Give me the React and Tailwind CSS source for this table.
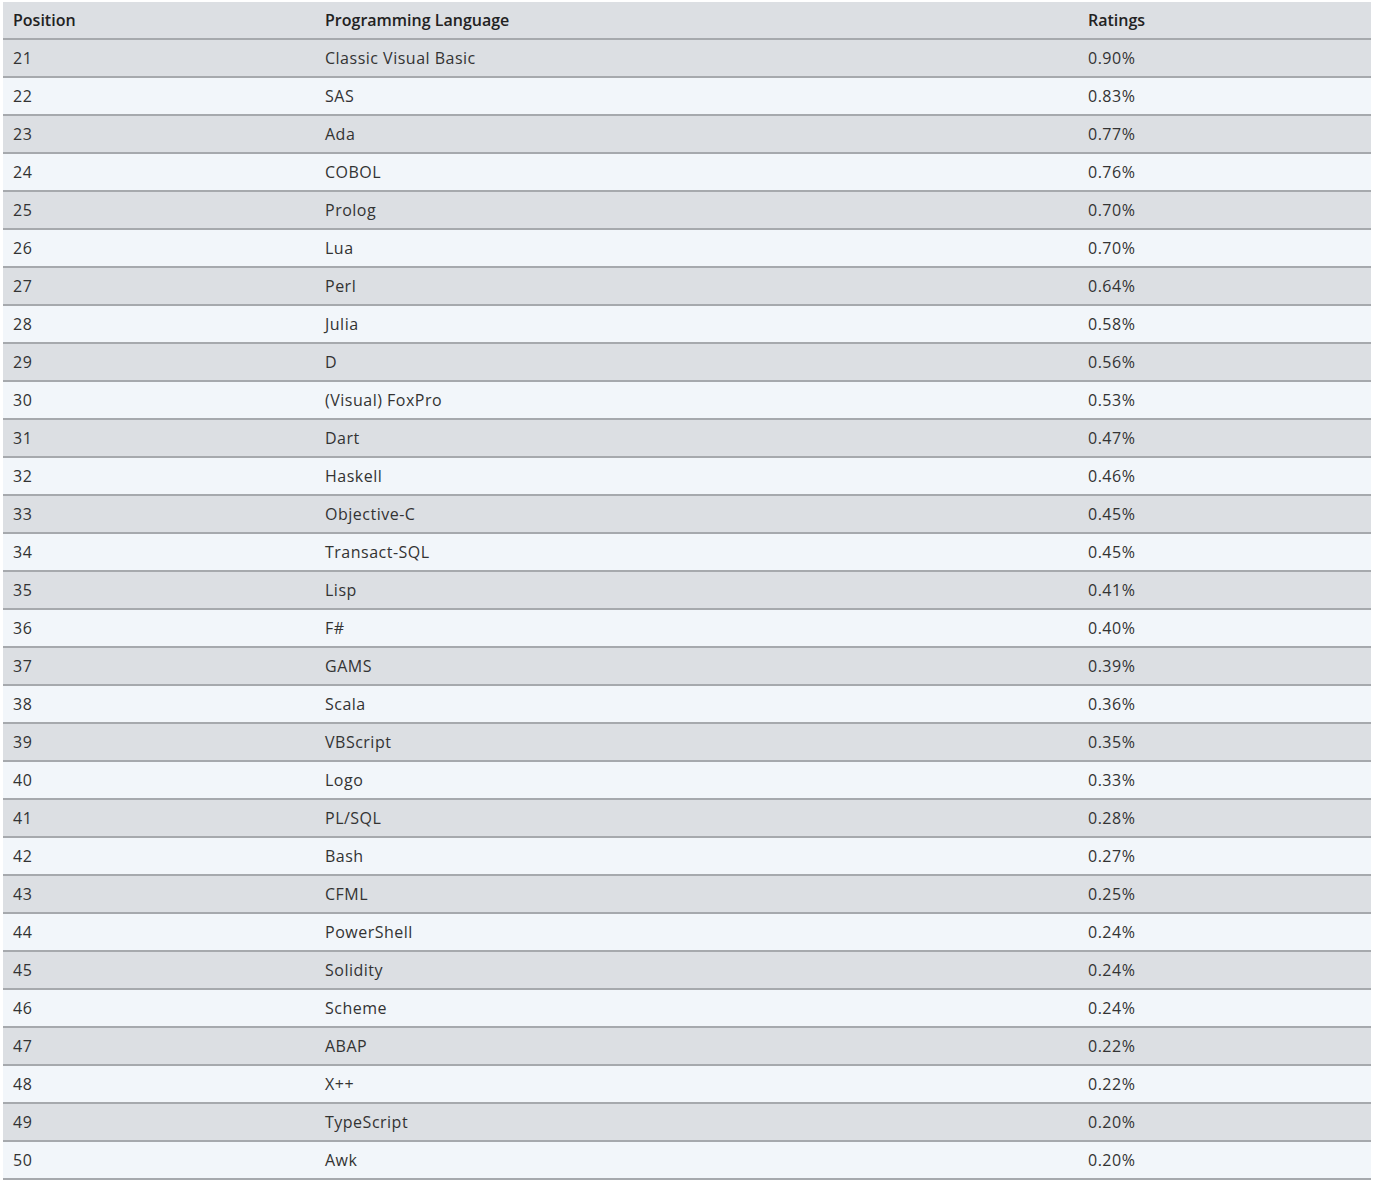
const rows = [
  [21, "Classic Visual Basic", "0.90%"],
  [22, "SAS", "0.83%"],
  [23, "Ada", "0.77%"],
  [24, "COBOL", "0.76%"],
  [25, "Prolog", "0.70%"],
  [26, "Lua", "0.70%"],
  [27, "Perl", "0.64%"],
  [28, "Julia", "0.58%"],
  [29, "D", "0.56%"],
  [30, "(Visual) FoxPro", "0.53%"],
  [31, "Dart", "0.47%"],
  [32, "Haskell", "0.46%"],
  [33, "Objective-C", "0.45%"],
  [34, "Transact-SQL", "0.45%"],
  [35, "Lisp", "0.41%"],
  [36, "F#", "0.40%"],
  [37, "GAMS", "0.39%"],
  [38, "Scala", "0.36%"],
  [39, "VBScript", "0.35%"],
  [40, "Logo", "0.33%"],
  [41, "PL/SQL", "0.28%"],
  [42, "Bash", "0.27%"],
  [43, "CFML", "0.25%"],
  [44, "PowerShell", "0.24%"],
  [45, "Solidity", "0.24%"],
  [46, "Scheme", "0.24%"],
  [47, "ABAP", "0.22%"],
  [48, "X++", "0.22%"],
  [49, "TypeScript", "0.20%"],
  [50, "Awk", "0.20%"],
];

export default function App() {
  return (
    <div className="min-h-screen bg-white pl-[3px] pt-[2px] font-['Open_Sans',sans-serif] text-[16px] text-[#333]">
      <div className="w-[1368px]">
        {/* Header */}
        <div className="grid h-[38px] grid-cols-[312px_763px_1fr] items-center border-b-2 border-[#a6a9ad] bg-[#dcdfe3] font-semibold text-[#222]">
          <div className="px-[10px]">Position</div>
          <div className="px-[10px]">Programming Language</div>
          <div className="px-[10px]">Ratings</div>
        </div>

        {/* Rows */}
        {rows.map(([pos, lang, rating], i) => (
          <div
            key={pos}
            className={
              "grid h-[38px] grid-cols-[312px_763px_1fr] items-center border-b-2 border-[#a6a9ad] tracking-[0.5px] " +
              (i % 2 === 0 ? "bg-[#dcdfe3]" : "bg-[#f2f6fa]")
            }
          >
            <div className="px-[10px]">{pos}</div>
            <div className="px-[10px]">{lang}</div>
            <div className="px-[10px]">{rating}</div>
          </div>
        ))}
      </div>
    </div>
  );
}
